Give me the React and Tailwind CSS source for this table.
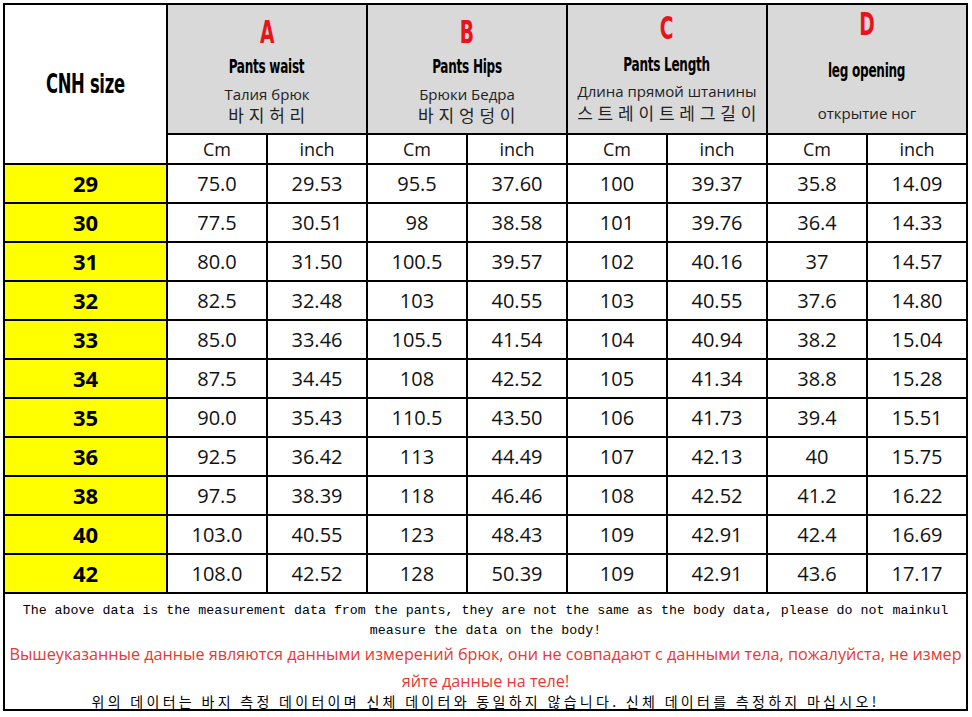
import React from "react";

const rows = [
  ["29", "75.0", "29.53", "95.5", "37.60", "100", "39.37", "35.8", "14.09"],
  ["30", "77.5", "30.51", "98", "38.58", "101", "39.76", "36.4", "14.33"],
  ["31", "80.0", "31.50", "100.5", "39.57", "102", "40.16", "37", "14.57"],
  ["32", "82.5", "32.48", "103", "40.55", "103", "40.55", "37.6", "14.80"],
  ["33", "85.0", "33.46", "105.5", "41.54", "104", "40.94", "38.2", "15.04"],
  ["34", "87.5", "34.45", "108", "42.52", "105", "41.34", "38.8", "15.28"],
  ["35", "90.0", "35.43", "110.5", "43.50", "106", "41.73", "39.4", "15.51"],
  ["36", "92.5", "36.42", "113", "44.49", "107", "42.13", "40", "15.75"],
  ["38", "97.5", "38.39", "118", "46.46", "108", "42.52", "41.2", "16.22"],
  ["40", "103.0", "40.55", "123", "48.43", "109", "42.91", "42.4", "16.69"],
  ["42", "108.0", "42.52", "128", "50.39", "109", "42.91", "43.6", "17.17"],
];

const narrow = "font-['Liberation_Sans_Narrow','DejaVu_Sans_Condensed',sans-serif] font-bold";
const body = "font-['Open_Sans','Noto_Sans',sans-serif]";
const kr = "font-['Noto_Sans_CJK_KR',sans-serif]";

// condensed heading text: the font is squeezed horizontally
function Letter({ children, className }) {
  return (
    <div className={`h-[36px] leading-[36px] text-[32px] text-[#e8141b] ${narrow} ${className}`}>
      <span className="inline-block scale-x-[0.65]">{children}</span>
    </div>
  );
}

function Label({ children, className }) {
  return (
    <div className={`h-[24px] leading-[24px] text-[20px] tracking-[-0.4px] text-black ${narrow} ${className}`}>
      <span className="inline-block scale-x-[0.67]">{children}</span>
    </div>
  );
}

export default function App() {
  return (
    <div className="w-[972px] h-[717px] bg-white pt-[3px] pl-[3px]">
      <div className="grid w-[965px] bg-black p-[2px] gap-[2px] grid-cols-[161px_repeat(8,98px)] grid-rows-[128px_28px_repeat(11,37px)_115px]">
        {/* size header */}
        <div className={`row-span-2 bg-white flex items-center justify-center text-[26px] tracking-[-0.4px] text-black ${narrow}`}>
          <span className="inline-block scale-x-[0.7]">CNH size</span>
        </div>

        {/* A */}
        <div className="col-span-2 bg-[#d9d9d9] flex flex-col items-center pt-[9px]">
          <Letter>A</Letter>
          <Label className="mt-[4px]">Pants waist</Label>
          <div className={`mt-[7px] h-[18px] leading-[18px] text-[15px] text-[#222] ${body}`}>Талия брюк</div>
          <div className={`mt-[2px] h-[20px] leading-[20px] text-[17px] tracking-[0.5px] text-[#222] ${kr}`}>바 지 허 리</div>
        </div>

        {/* B */}
        <div className="col-span-2 bg-[#d9d9d9] flex flex-col items-center pt-[9px]">
          <Letter>B</Letter>
          <Label className="mt-[4px]">Pants Hips</Label>
          <div className={`mt-[7px] h-[18px] leading-[18px] text-[15px] text-[#222] ${body}`}>Брюки Бедра</div>
          <div className={`mt-[2px] h-[20px] leading-[20px] text-[17px] tracking-[0.5px] text-[#222] ${kr}`}>바 지 엉 덩 이</div>
        </div>

        {/* C */}
        <div className="col-span-2 bg-[#d9d9d9] flex flex-col items-center pt-[5px]">
          <Letter>C</Letter>
          <Label className="mt-[6px]">Pants Length</Label>
          <div className={`mt-[6px] h-[18px] leading-[18px] text-[15px] text-[#222] ${body}`}>Длина прямой штанины</div>
          <div className={`mt-[3px] h-[20px] leading-[20px] text-[17px] tracking-[0.5px] text-[#222] ${kr}`}>스 트 레 이 트 레 그 길 이</div>
        </div>

        {/* D */}
        <div className="col-span-2 bg-[#d9d9d9] flex flex-col items-center pt-[1px]">
          <Letter>D</Letter>
          <Label className="mt-[16px]">leg opening</Label>
          <div className={`mt-[22px] h-[18px] leading-[18px] text-[15px] text-[#222] ${body}`}>открытие ног</div>
        </div>

        {/* units */}
        {["Cm", "inch", "Cm", "inch", "Cm", "inch", "Cm", "inch"].map((u, i) => (
          <div key={i} className={`bg-white flex items-center justify-center pt-[1px] text-[18px] text-[#111] ${body}`}>
            {u}
          </div>
        ))}

        {/* data */}
        {rows.map((r) =>
          r.map((v, i) =>
            i === 0 ? (
              <div key={r[0] + i} className={`bg-[#ffff00] flex items-center justify-center text-[22px] font-bold text-black ${body}`}>
                {v}
              </div>
            ) : (
              <div key={r[0] + i} className={`bg-white flex items-center justify-center text-[20px] text-[#111] ${body}`}>
                {v}
              </div>
            )
          )
        )}

        {/* note */}
        <div className="col-span-9 bg-white flex flex-col items-center pt-[6px]">
          <div className="h-[21px] leading-[21px] text-[13.3px] text-black font-['Liberation_Mono',monospace] whitespace-nowrap">
            The above data is the measurement data from the pants, they are not the same as the body data, please do not mainkul
          </div>
          <div className="h-[19px] leading-[19px] text-[13.3px] text-black font-['Liberation_Mono',monospace] whitespace-nowrap">
            measure the data on the body!
          </div>
          <div className={`h-[28px] leading-[28px] text-[16.2px] text-[#e53935] whitespace-nowrap ${body}`}>
            Вышеуказанные данные являются данными измерений брюк, они не совпадают с данными тела, пожалуйста, не измер
          </div>
          <div className={`h-[26px] leading-[26px] text-[16.2px] text-[#e53935] whitespace-nowrap ${body}`}>
            яйте данные на теле!
          </div>
          <div className={`h-[15px] leading-[15px] text-[14px] tracking-[3.3px] text-black whitespace-nowrap ${kr}`}>
            위의 데이터는 바지 측정 데이터이며 신체 데이터와 동일하지 않습니다. 신체 데이터를 측정하지 마십시오!
          </div>
        </div>
      </div>
    </div>
  );
}
